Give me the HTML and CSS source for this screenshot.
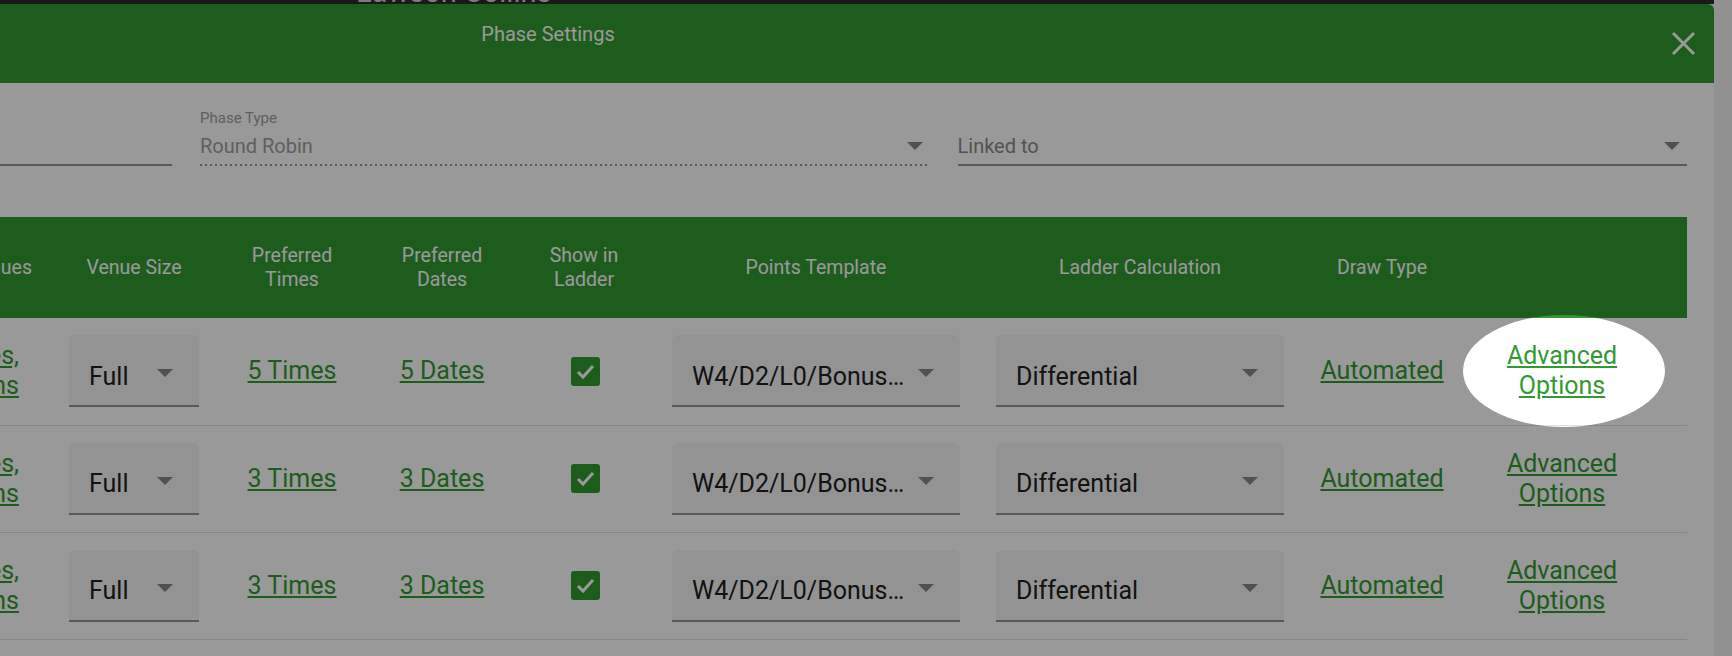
FILE: index.html
```html
<html>

<head>
    <meta name="viewport" content="width=device-width, initial-scale=1.0">
    <meta charset="UTF-8">
    <title>Phase Settings</title>
    <link rel="stylesheet" href="styles.css">
</head>

<body>
    <div class="app-bar"><span>Lawson Collins</span></div>

    <div class="modal">
        <div class="modal-head">
            <div class="modal-title">Phase Settings</div>
            <svg class="modal-close" viewBox="0 0 25 25">
                <path d="M2 2L23 23M23 2L2 23" stroke="#fff" stroke-width="3" fill="none" />
            </svg>
        </div>

        <div class="fields">
            <div class="field field-short">
                <div class="field-label"></div>
                <div class="field-input"><span>&nbsp;</span></div>
            </div>
            <div class="field field-disabled">
                <div class="field-label">Phase Type</div>
                <div class="field-input"><span>Round Robin</span><i class="caret"></i></div>
            </div>
            <div class="field field-linked">
                <div class="field-label"></div>
                <div class="field-input"><span>Linked to</span><i class="caret"></i></div>
            </div>
        </div>

        <table class="phases">
            <colgroup>
                <col style="width: 50px">
                <col style="width: 168px">
                <col style="width: 148px">
                <col style="width: 152px">
                <col style="width: 132px">
                <col style="width: 332px">
                <col style="width: 316px">
                <col style="width: 168px">
                <col style="width: 192px">
                <col style="width: 29px">
            </colgroup>
            <thead>
                <tr>
                    <th><div class="clip clip-head"><span>Preferred Venues</span></div></th>
                    <th>Venue Size</th>
                    <th>Preferred<br>Times</th>
                    <th>Preferred<br>Dates</th>
                    <th>Show in<br>Ladder</th>
                    <th>Points Template</th>
                    <th>Ladder Calculation</th>
                    <th>Draw Type</th>
                    <th></th>
                    <th></th>
                </tr>
            </thead>
            <tbody>
                <tr>
                    <td><div class="clip"><a href="#">All Venues,<br>No Exclusions</a></div></td>
                    <td><div class="select select-sm"><span>Full</span><i class="caret"></i></div></td>
                    <td><a href="#">5 Times</a></td>
                    <td><a href="#">5 Dates</a></td>
                    <td><span class="check"><svg viewBox="0 0 29 29"><path d="M7 15l5 5 10-11" stroke="#fff" stroke-width="3" fill="none" /></svg></span></td>
                    <td><div class="select select-lg"><span>W4/D2/L0/Bonus Points</span><i class="caret"></i></div></td>
                    <td><div class="select select-lg"><span>Differential</span><i class="caret"></i></div></td>
                    <td><a href="#">Automated</a></td>
                    <td><a href="#">Advanced<br>Options</a></td>
                    <td></td>
                </tr>
                <tr>
                    <td><div class="clip"><a href="#">All Venues,<br>No Exclusions</a></div></td>
                    <td><div class="select select-sm"><span>Full</span><i class="caret"></i></div></td>
                    <td><a href="#">3 Times</a></td>
                    <td><a href="#">3 Dates</a></td>
                    <td><span class="check"><svg viewBox="0 0 29 29"><path d="M7 15l5 5 10-11" stroke="#fff" stroke-width="3" fill="none" /></svg></span></td>
                    <td><div class="select select-lg"><span>W4/D2/L0/Bonus Points</span><i class="caret"></i></div></td>
                    <td><div class="select select-lg"><span>Differential</span><i class="caret"></i></div></td>
                    <td><a href="#">Automated</a></td>
                    <td><a href="#">Advanced<br>Options</a></td>
                    <td></td>
                </tr>
                <tr>
                    <td><div class="clip"><a href="#">All Venues,<br>No Exclusions</a></div></td>
                    <td><div class="select select-sm"><span>Full</span><i class="caret"></i></div></td>
                    <td><a href="#">3 Times</a></td>
                    <td><a href="#">3 Dates</a></td>
                    <td><span class="check"><svg viewBox="0 0 29 29"><path d="M7 15l5 5 10-11" stroke="#fff" stroke-width="3" fill="none" /></svg></span></td>
                    <td><div class="select select-lg"><span>W4/D2/L0/Bonus Points</span><i class="caret"></i></div></td>
                    <td><div class="select select-lg"><span>Differential</span><i class="caret"></i></div></td>
                    <td><a href="#">Automated</a></td>
                    <td><a href="#">Advanced<br>Options</a></td>
                    <td></td>
                </tr>
            </tbody>
        </table>
    </div>

    <!-- tour highlight over the first "Advanced Options" link -->
    <div class="spotlight"></div>
</body>

</html>
```

FILE: styles.css
```css
body {
    margin: 0;
    height: 656px;
    overflow: hidden;
    position: relative;
    background: #f2f2f2;
    font-family: Roboto, "Liberation Sans", sans-serif;
}

.app-bar {
    width: 1714px;
    height: 4px;
    overflow: hidden;
    background: #2b2b2b;
}

.app-bar span {
    display: block;
    margin: -23px 0 0 356px;
    font-size: 29px;
    line-height: 30px;
    color: #cfcfcf;
    white-space: nowrap;
}

.modal {
    width: 1714px;
    height: 652px;
    background: #fff;
    border-top-right-radius: 6px;
    overflow: hidden;
}

.modal-head {
    display: flex;
    height: 79px;
    background: #339933;
    color: #fff;
}

.modal-title {
    width: 1096px;
    padding-top: 17px;
    font-size: 20px;
    line-height: 26px;
    text-align: center;
}

.modal-close {
    width: 25px;
    height: 25px;
    margin: 27px 18px 0 auto;
}

/* top form fields */
.fields {
    display: flex;
    gap: 28px;
    padding: 26px 27px 0 0;
    margin-bottom: 51px;
}

.field {
    flex: 1;
}

.field-short {
    flex: 0 0 172px;
}

.field-label {
    height: 18px;
    margin-bottom: 7px;
    font-size: 15px;
    line-height: 18px;
    color: #9e9e9e;
}

.field-input {
    display: flex;
    align-items: center;
    justify-content: space-between;
    padding: 0 7px 6px 0;
    font-size: 20px;
    line-height: 24px;
    border-bottom: 2px solid #949494;
    color: #8a8a8a;
}

.field-disabled .field-input {
    border-bottom: none;
    padding-bottom: 8px;
    color: #9e9e9e;
    background: repeating-linear-gradient(to right, #949494 0 2px, transparent 2px 5px) bottom / 100% 2px no-repeat;
}

.caret {
    width: 0;
    height: 0;
    border-left: 8px solid transparent;
    border-right: 8px solid transparent;
    border-top: 8px solid #888;
    flex: none;
}

/* phases table */
.phases {
    width: 1687px;
    table-layout: fixed;
    border-collapse: collapse;
}

.phases th {
    height: 101px;
    padding: 0;
    background: #339933;
    color: #fff;
    font-weight: 400;
    font-size: 19.5px;
    line-height: 24px;
    text-align: center;
}

.phases td {
    height: 107px;
    padding: 0;
    border-bottom: 1px solid #e0e0e0;
    text-align: center;
    vertical-align: middle;
}

.phases a {
    color: #339933;
    font-size: 25px;
    line-height: 30px;
}

.clip {
    display: flex;
    flex-direction: column;
    align-items: flex-end;
    overflow: hidden;
    padding-right: 31px;
    white-space: nowrap;
    text-align: right;
}

.clip-head {
    padding-right: 18px;
}

.select {
    display: inline-flex;
    align-items: center;
    gap: 12px;
    box-sizing: border-box;
    height: 72px;
    padding: 12px 26px 0 20px;
    vertical-align: middle;
    background: #f5f5f5;
    border-bottom: 2px solid #949494;
    border-radius: 6px 6px 0 0;
    font-size: 25px;
    color: #212121;
    text-align: left;
}

.select span {
    flex: 1;
    overflow: hidden;
    white-space: nowrap;
    text-overflow: ellipsis;
}

.select .caret {
    margin-bottom: 6px;
}

.select-sm {
    width: 130px;
}

.select-lg {
    width: 288px;
}

.check {
    display: inline-block;
    width: 29px;
    height: 29px;
    margin-left: 3px;
    vertical-align: middle;
    background: #339933;
    border-radius: 3px;
}

.check svg {
    display: block;
    width: 29px;
    height: 29px;
}

.spotlight {
    position: absolute;
    left: 1463px;
    top: 315px;
    width: 202px;
    height: 112px;
    border-radius: 50%;
    box-shadow: 0 0 3px 2400px rgba(0, 0, 0, 0.4);
    pointer-events: none;
}
```
